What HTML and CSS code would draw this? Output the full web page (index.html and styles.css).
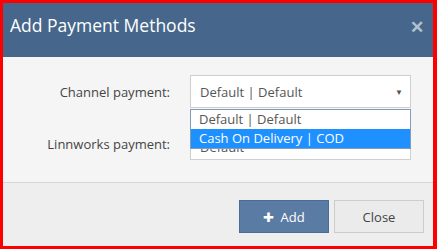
FILE: index.html
```html
<!DOCTYPE html>
<html>
<head>
<meta charset="utf-8">
<link rel="stylesheet" href="styles.css">
</head>
<body>
<div class="frame">
  <div class="modal">
    <div class="header">
      <h1 class="title">Add Payment Methods</h1>
      <span class="close-x">&#x2715;</span>
    </div>
    <div class="body">
      <div class="row">
        <label class="label">Channel payment:</label>
        <div class="field">
          <div class="select">
            <span>Default | Default</span>
            <span class="arrow">&#9660;</span>
          </div>
          <ul class="dropdown">
            <li class="opt">Default | Default</li>
            <li class="opt active">Cash On Delivery | COD</li>
          </ul>
        </div>
      </div>
      <div class="row row2">
        <label class="label">Linnworks payment:</label>
        <div class="field">
          <div class="select select-low">
            <span>Default</span>
          </div>
        </div>
      </div>
    </div>
    <div class="footer">
      <button class="btn btn-primary"><span class="plus">&#x271A;</span> Add</button>
      <button class="btn btn-default">Close</button>
    </div>
  </div>
</div>
</body>
</html>
```
FILE: styles.css
```css
html, body {
  margin: 0;
  padding: 0;
}
body {
  font-family: "Open Sans", "Liberation Sans", sans-serif;
  width: 437px;
  height: 249px;
  overflow: hidden;
}
.frame {
  box-sizing: border-box;
  width: 437px;
  height: 249px;
  border-style: solid;
  border-color: #ff0000;
  border-width: 3px 4px 3px 3px;
}
.modal {
  display: flex;
  flex-direction: column;
  height: 100%;
}
.header {
  background: #46678b;
  height: 54px;
  display: flex;
  align-items: flex-start;
  justify-content: space-between;
  padding: 0 9px 0 7px;
}
.title {
  margin: 9px 0 0 0;
  font-weight: 400;
  font-size: 17.5px;
  color: #ffffff;
  line-height: 26px;
}
.close-x {
  color: #b2c0cf;
  font-size: 17px;
  margin-top: 12px;
  font-weight: 700;
}
.body {
  background: #f5f5f5;
  height: 126px;
  border-bottom: 1px solid #d6d6d6;
  padding-top: 18px;
  box-sizing: border-box;
}
.row {
  display: flex;
  align-items: center;
  height: 33px;
}
.row2 {
  margin-top: 19px;
}
.label {
  width: 183px;
  text-align: right;
  font-size: 13px;
  color: #444;
  padding-right: 16px;
  box-sizing: border-box;
  margin-right: 4px;
}
.field {
  position: relative;
  width: 221px;
}
.select {
  box-sizing: border-box;
  height: 33px;
  background: #fff;
  border: 1px solid #cfcfcf;
  display: flex;
  align-items: center;
  justify-content: space-between;
  padding: 0 7px 0 9px;
  font-size: 13px;
  color: #555;
}
.select-low {
  padding-top: 6px;
}
.arrow {
  font-size: 8px;
  color: #555;
}
.dropdown {
  position: absolute;
  left: 0;
  top: 34px;
  width: 221px;
  box-sizing: border-box;
  margin: 0;
  padding: 0;
  list-style: none;
  background: #fff;
  border: 1px solid #7f9db9;
  z-index: 2;
}
.opt {
  height: 19px;
  line-height: 19px;
  font-size: 13px;
  color: #555;
  padding-left: 8px;
}
.opt.active {
  background: #1e90ff;
  color: #fff;
}
.footer {
  flex: 1;
  background: #eeeeee;
  display: flex;
  justify-content: flex-end;
  align-items: flex-start;
  gap: 5px;
  padding: 17px 9px 0 0;
}
.btn {
  font-family: "Open Sans", "Liberation Sans", sans-serif;
  font-size: 13px;
  height: 33px;
  width: 90px;
  box-sizing: border-box;
  border-radius: 0;
  cursor: pointer;
}
.btn-primary {
  background: #5a7ca4;
  border: 1px solid #4b6d94;
  color: #fff;
}
.plus {
  font-size: 13px;
  margin-right: 3px;
}
.btn-default {
  background: #ebebeb;
  border: 1px solid #cccccc;
  color: #444;
}
```
